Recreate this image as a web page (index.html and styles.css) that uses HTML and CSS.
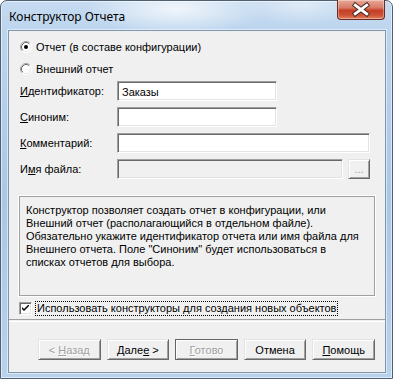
FILE: index.html
```html
<!DOCTYPE html>
<html lang="ru">
<head>
    <meta charset="UTF-8">
    <title>Конструктор Отчета</title>
    <link rel="stylesheet" href="styles.css">
</head>
<body>
    <div class="window">
        <div class="titlebar">
            <span class="title">Конструктор Отчета</span>
            <button class="close-btn">
                <svg width="48" height="19" viewBox="0 0 48 19">
                    <path d="M18 5 L30 14 M30 5 L18 14" stroke="#4a2a26" stroke-width="5" stroke-linecap="square" fill="none"/>
                    <path d="M18 5 L30 14 M30 5 L18 14" stroke="#fff" stroke-width="3" stroke-linecap="square" fill="none"/>
                </svg>
            </button>
        </div>

        <div class="client">
            <div class="radios">
                <div class="radio">
                    <svg class="radio-box" width="12" height="12" viewBox="0 0 12 12">
                        <circle cx="6" cy="6" r="5.5" fill="#fff"/>
                        <path d="M2.11 9.89 A5.5 5.5 0 0 1 9.89 2.11" stroke="#a0a0a0" fill="none"/>
                        <path d="M2.82 9.18 A4.5 4.5 0 0 1 9.18 2.82" stroke="#696969" fill="none"/>
                        <path d="M9.89 2.11 A5.5 5.5 0 0 1 2.11 9.89" stroke="#fff" fill="none"/>
                        <path d="M9.18 2.82 A4.5 4.5 0 0 1 2.82 9.18" stroke="#e3e3e3" fill="none"/>
                        <circle cx="6" cy="6" r="2" fill="#000"/>
                    </svg>
                    <span>Отчет (в составе конфигурации)</span>
                </div>
                <div class="radio">
                    <svg class="radio-box" width="12" height="12" viewBox="0 0 12 12">
                        <circle cx="6" cy="6" r="5.5" fill="#fff"/>
                        <path d="M2.11 9.89 A5.5 5.5 0 0 1 9.89 2.11" stroke="#a0a0a0" fill="none"/>
                        <path d="M2.82 9.18 A4.5 4.5 0 0 1 9.18 2.82" stroke="#696969" fill="none"/>
                        <path d="M9.89 2.11 A5.5 5.5 0 0 1 2.11 9.89" stroke="#fff" fill="none"/>
                        <path d="M9.18 2.82 A4.5 4.5 0 0 1 2.82 9.18" stroke="#e3e3e3" fill="none"/>
                    </svg>
                    <span>Внешний отчет</span>
                </div>
            </div>

            <div class="fields">
                <span class="label"><u>И</u>дентификатор:</span>
                <div class="input narrow">Заказы</div>

                <span class="label"><u>С</u>иноним:</span>
                <div class="input narrow"></div>

                <span class="label"><u>К</u>омментарий:</span>
                <div class="input wide"></div>

                <span class="label">И<u>м</u>я файла:</span>
                <div class="file-row">
                    <div class="input file disabled"></div>
                    <button class="btn browse-btn">...</button>
                </div>
            </div>

            <div class="info">
                Конструктор позволяет создать отчет в конфигурации, или
                Внешний отчет (располагающийся в отдельном файле).
                Обязательно укажите идентификатор отчета или имя файла для
                Внешнего отчета. Поле "Синоним" будет использоваться в
                списках отчетов для выбора.
            </div>

            <div class="check">
                <span class="check-box">
                    <svg width="7" height="7" viewBox="0 0 7 7">
                        <path d="M0 2 L0 4 L2 6 L7 1 L7 -1 L2 4 Z" fill="#000"/>
                    </svg>
                </span>
                <span class="focus-text">Использовать конструкторы для создания новых объектов</span>
            </div>

            <div class="separator"></div>

            <div class="buttons">
                <button class="btn disabled">&lt; <u>Н</u>азад</button>
                <button class="btn">Дале<u>е</u> &gt;</button>
                <button class="btn disabled default"><u>Г</u>отово</button>
                <button class="btn">Отмена</button>
                <button class="btn"><u>П</u>омощь</button>
            </div>
        </div>
    </div>
</body>
</html>
```

FILE: styles.css
```css
body {
    margin: 0;
    width: 393px;
    height: 379px;
    overflow: hidden;
    background-color: #fff;
    font-family: "Liberation Sans", Arial, sans-serif;
    font-size: 11px;
    color: #000;
}

.window {
    width: 393px;
    height: 379px;
    box-sizing: border-box;
    border: 1px solid #4f6072;
    border-radius: 7px 7px 0 0;
    padding: 0 6px 5px 7px;
    display: flex;
    flex-direction: column;
    background:
        radial-gradient(ellipse 90px 26px at 175px 8px, rgba(255, 255, 255, 0.75), rgba(255, 255, 255, 0)),
        radial-gradient(ellipse 60px 20px at 300px 4px, rgba(255, 255, 255, 0.45), rgba(255, 255, 255, 0)),
        linear-gradient(180deg, #c6dbf1 0px, #bcd5ee 30px, #a9c7e7 200px, #b9d2ec 379px);
    box-shadow: inset 0 0 0 1px rgba(255, 255, 255, 0.55);
}

.titlebar {
    height: 29px;
    display: flex;
    justify-content: space-between;
    align-items: flex-start;
}

.title {
    margin-top: 8px;
    margin-left: 1px;
    font-family: "Noto Sans", "Open Sans", sans-serif;
    font-size: 12px;
    line-height: 15px;
    color: #000;
}

.close-btn {
    width: 48px;
    height: 20px;
    margin-top: -1px;
    margin-right: 1px;
    padding: 0;
    border: 1px solid #6b2a22;
    border-top: none;
    border-radius: 0 0 4px 4px;
    background: linear-gradient(180deg, #e9a898 0%, #d87c66 40%, #c63e26 55%, #cc5236 80%, #e2825f 100%);
    box-shadow: inset 0 0 0 1px rgba(255, 255, 255, 0.35);
    display: flex;
}

.client {
    flex: 1;
    border: 1px solid #7f95ab;
    box-shadow: 0 0 0 1px rgba(255, 255, 255, 0.5);
    background-color: #f0f0f0;
    padding: 0 10px;
    display: flex;
    flex-direction: column;
}

.radios {
    margin-top: 9px;
    display: flex;
    flex-direction: column;
    gap: 8px;
}

.radio {
    height: 14px;
    display: flex;
    align-items: center;
    gap: 4px;
    margin-left: 1px;
}

.fields {
    margin-top: 5px;
    display: grid;
    grid-template-columns: 98px auto;
    row-gap: 6px;
    justify-items: start;
    align-items: center;
}

.label {
    margin-left: 1px;
}

.input {
    height: 20px;
    box-sizing: border-box;
    background-color: #fff;
    border-top: 1px solid #a0a0a0;
    border-left: 1px solid #a0a0a0;
    border-bottom: 1px solid #fff;
    border-right: 1px solid #fff;
    box-shadow: inset 1px 1px 0 #696969, inset -1px -1px 0 #e3e3e3;
    padding: 3px 4px 0;
    line-height: 14px;
}

.narrow {
    width: 160px;
}

.wide {
    width: 253px;
}

.file-row {
    display: flex;
    gap: 5px;
}

.file {
    width: 226px;
}

.input.disabled {
    background-color: #f0f0f0;
}

.btn {
    box-sizing: border-box;
    padding: 0;
    font-family: "Liberation Sans", Arial, sans-serif;
    font-size: 11px;
    font-weight: normal;
    color: #000;
    background-color: #f0f0f0;
    border-top: 1px solid #e3e3e3;
    border-left: 1px solid #e3e3e3;
    border-bottom: 1px solid #696969;
    border-right: 1px solid #696969;
    box-shadow: inset 1px 1px 0 #fff, inset -1px -1px 0 #a0a0a0;
}

.btn.disabled {
    color: #a0a0a0;
    text-shadow: 1px 1px 0 #fff;
}

.btn.default {
    border: 1px solid #646464;
}

.browse-btn {
    width: 22px;
    height: 20px;
    color: #a0a0a0;
    line-height: 14px;
}

.info {
    margin-top: 17px;
    height: 100px;
    box-sizing: border-box;
    border: 1px solid #a0a0a0;
    box-shadow: 0 0 0 1px #fff;
    padding: 7px 6px 0;
    line-height: 13px;
}

.check {
    margin-top: 5px;
    height: 15px;
    display: flex;
    align-items: center;
    gap: 3px;
}

.check-box {
    width: 13px;
    height: 13px;
    box-sizing: border-box;
    background-color: #fff;
    border-top: 1px solid #a0a0a0;
    border-left: 1px solid #a0a0a0;
    border-bottom: 1px solid #fff;
    border-right: 1px solid #fff;
    box-shadow: inset 1px 1px 0 #696969, inset -1px -1px 0 #e3e3e3;
    display: flex;
    align-items: center;
    justify-content: center;
}

.focus-text {
    border: 1px dotted #000;
    padding: 0 1px;
    line-height: 13px;
}

.separator {
    margin: 3px -10px 0;
    height: 1px;
    border-top: 1px solid #a0a0a0;
    border-bottom: 1px solid #fff;
}

.buttons {
    margin-top: 17px;
    padding-left: 19px;
    display: flex;
    gap: 6px;
}

.buttons .btn {
    width: 63px;
    height: 21px;
}
```
